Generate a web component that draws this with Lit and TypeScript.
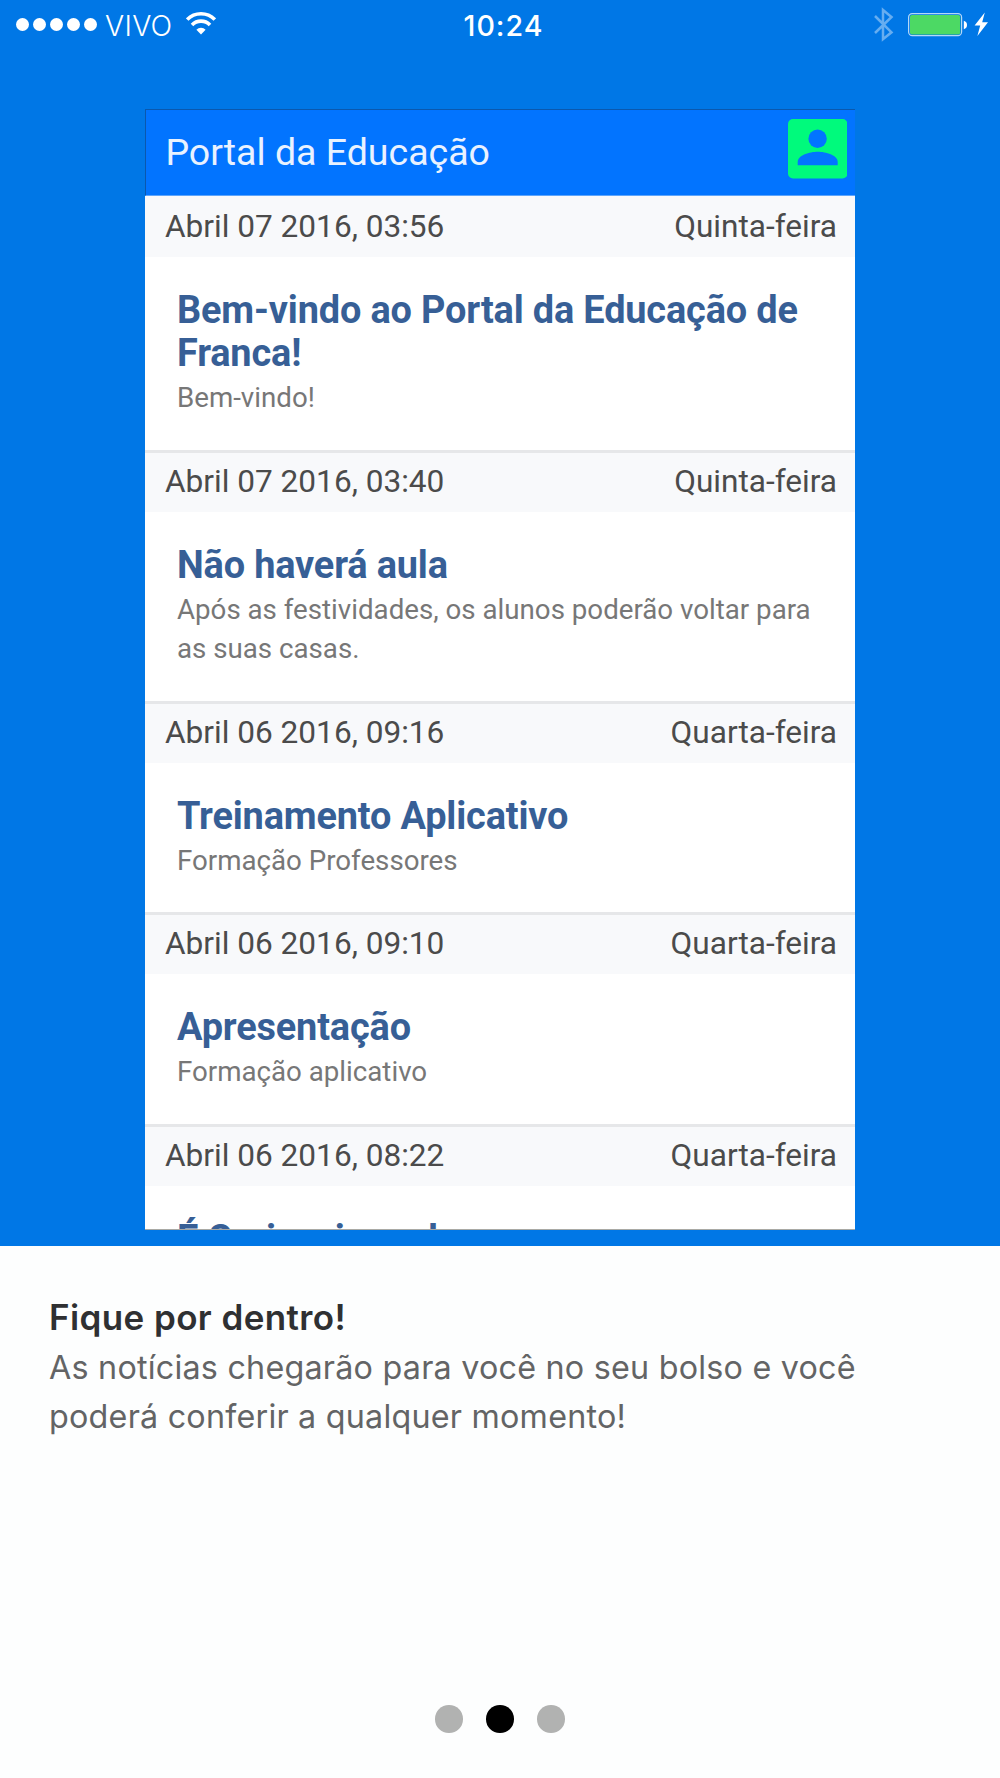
import { LitElement, html, css } from "lit";
import { customElement, property } from "lit/decorators.js";

interface Post {
  date: string;
  weekday: string;
  title: string;
  body: string;
}

const POSTS: Post[] = [
  { date: "Abril 07 2016, 03:56", weekday: "Quinta-feira", title: "Bem-vindo ao Portal da Educação de Franca!", body: "Bem-vindo!" },
  { date: "Abril 07 2016, 03:40", weekday: "Quinta-feira", title: "Não haverá aula", body: "Após as festividades, os alunos poderão voltar para as suas casas." },
  { date: "Abril 06 2016, 09:16", weekday: "Quarta-feira", title: "Treinamento Aplicativo", body: "Formação Professores" },
  { date: "Abril 06 2016, 09:10", weekday: "Quarta-feira", title: "Apresentação", body: "Formação aplicativo" },
  { date: "Abril 06 2016, 08:22", weekday: "Quarta-feira", title: "É Caricasinonal", body: "" },
];

@customElement("status-bar")
class StatusBar extends LitElement {
  static styles = css`
    :host {
      display: grid;
      grid-template-columns: 1fr auto 1fr;
      height: 50px;
      color: #fff;
      font-family: Inter, "Liberation Sans", sans-serif;
    }
    .left, .right { display: flex; align-items: flex-start; }
    .left { padding-left: 16px; }
    .right { justify-content: flex-end; padding-right: 12px; }
    .signal { display: flex; gap: 4px; padding-top: 18px; }
    .signal i { width: 13px; height: 13px; border-radius: 50%; background: #fff; }
    .carrier { font-size: 28.4px; font-weight: 300; line-height: 51px; margin-left: 8px; width: 81px; white-space: nowrap; letter-spacing: 0.3px; }
    .clock { font-size: 28.6px; font-weight: 550; line-height: 51px; letter-spacing: 1px; padding-left: 7px; }
    svg { display: block; }
  `;

  render() {
    return html`
      <div class="left">
        <span class="signal">${[0, 1, 2, 3, 4].map(() => html`<i></i>`)}</span>
        <span class="carrier">VIVO</span>
        <svg width="30" height="50" viewBox="0 0 30 50">
          <g fill="none" stroke="#fff" stroke-width="3.6">
            <path d="M1.2 19.6A19.3 19.3 0 0 1 28.8 19.6" />
            <path d="M6 24.9A12.6 12.6 0 0 1 24 24.9" />
          </g>
          <path d="M10.4 29.7A6.5 6.5 0 0 1 19.6 29.7L15 34.4Z" fill="#fff" />
        </svg>
      </div>
      <div class="clock">10:24</div>
      <div class="right">
        <svg width="114" height="50" viewBox="874 0 114 50">
          <path d="M875 16L891.5 32.3L883 39.2V10L891.5 17L875 33" fill="none" stroke="#66adf0" stroke-width="2.5" />
          <rect x="908.6" y="13.6" width="53" height="22" rx="3.6" fill="#0077e6" stroke="#b5d8f8" stroke-width="1.2" />
          <rect x="910" y="15" width="50.2" height="19.4" rx="2" fill="#4cd964" />
          <path d="M963.8 20.8Q967 21.8 967 25T963.8 29.2Z" fill="#fff" />
          <path d="M984.8 12.4L974.6 25.4H980.2L977.4 36L988 22.2H982.2Z" fill="#fff" />
        </svg>
      </div>
    `;
  }
}

@customElement("post-row")
class PostRow extends LitElement {
  @property({ attribute: false }) post!: Post;
  @property({ type: Boolean, reflect: true }) first = false;

  static styles = css`
    :host { display: block; border-bottom: 3px solid #e6e7e9; }
    .meta {
      display: flex;
      justify-content: space-between;
      height: 59px;
      line-height: 58.6px;
      padding: 0 18px 0 20px;
      background: #f8f9fb;
      color: #4b4b4b;
      font-size: 31.6px;
    }
    :host([first]) .meta { height: 61px; line-height: 62px; }
    .content { padding: 32px 28px 32.2px 32px; }
    .title {
      margin: 0;
      color: #375f96;
      font-size: 37.9px;
      font-weight: 700;
      line-height: 43.3px;
      letter-spacing: -0.16px;
    }
    .body { margin: 0; color: #777; font-size: 27.7px; line-height: 39.4px; padding-top: 2.6px; }
  `;

  render() {
    const p = this.post;
    return html`
      <div class="meta"><span>${p.date}</span><span>${p.weekday}</span></div>
      <div class="content">
        <h2 class="title">${p.title}</h2>
        ${p.body ? html`<p class="body">${p.body}</p>` : null}
      </div>
    `;
  }
}

@customElement("app-root")
class AppRoot extends LitElement {
  static styles = css`
    :host { display: flex; flex-direction: column; width: 1000px; height: 1778px; background: #fdfefe; overflow: hidden; }
    .hero { height: 1246px; flex: none; background: #0077e6; }
    .phone {
      box-sizing: border-box;
      width: 710px;
      height: 1121px;
      margin: 59px auto 0;
      overflow: hidden;
      background: #fff;
      border-bottom: 1px solid #a9a9a4;
      font-family: Roboto, sans-serif;
    }
    .bar {
      box-sizing: border-box;
      display: flex;
      justify-content: space-between;
      height: 87px;
      padding: 9px 8px 0 19.4px;
      background: #0274ff;
      border-top: 1px solid #0a58ae;
      border-left: 1px solid #0a58ae;
      border-bottom: 1px solid #5ea5fb;
      color: #e9f2ff;
      font-size: 37.5px;
      line-height: 66px;
    }
    .user { display: block; }
    .caption { padding: 48px 49px 0; font-family: Inter, "Liberation Sans", sans-serif; }
    .caption h1 { margin: 0; color: #2f3032; font-size: 35px; font-weight: 600; line-height: 47.4px; letter-spacing: 0.4px; }
    .caption p { margin: 2.8px 0 0; color: #636465; font-size: 32.3px; line-height: 48.3px; letter-spacing: 0.22px; }
    .dots { display: flex; justify-content: center; gap: 23.3px; margin-top: auto; padding-bottom: 45px; }
    .dot { width: 27.6px; height: 27.6px; border-radius: 50%; background: #b1b2b1; }
    .dot.on { background: #000; }
  `;

  render() {
    return html`
      <section class="hero">
        <status-bar></status-bar>
        <div class="phone">
          <header class="bar">
            <span>Portal da Educação</span>
            <svg class="user" width="59.5" height="59.5" viewBox="0 0 59.5 59.5">
              <rect width="59.5" height="59.5" rx="5" fill="#00fa7c" />
              <circle cx="29.6" cy="19.8" r="9.2" fill="#0274ff" />
              <path d="M9.7 46.2V43C9.7 36.3 21.7 32.8 29.7 32.8S49.7 36.3 49.7 43V46.2Z" fill="#0274ff" />
            </svg>
          </header>
          ${POSTS.map((p, i) => html`<post-row .post=${p} ?first=${i === 0}></post-row>`)}
        </div>
      </section>
      <section class="caption">
        <h1>Fique por dentro!</h1>
        <p>As notícias chegarão para você no seu bolso e você poderá conferir a qualquer momento!</p>
      </section>
      <div class="dots">
        ${[false, true, false].map((on) => html`<span class="dot ${on ? "on" : ""}"></span>`)}
      </div>
    `;
  }
}
